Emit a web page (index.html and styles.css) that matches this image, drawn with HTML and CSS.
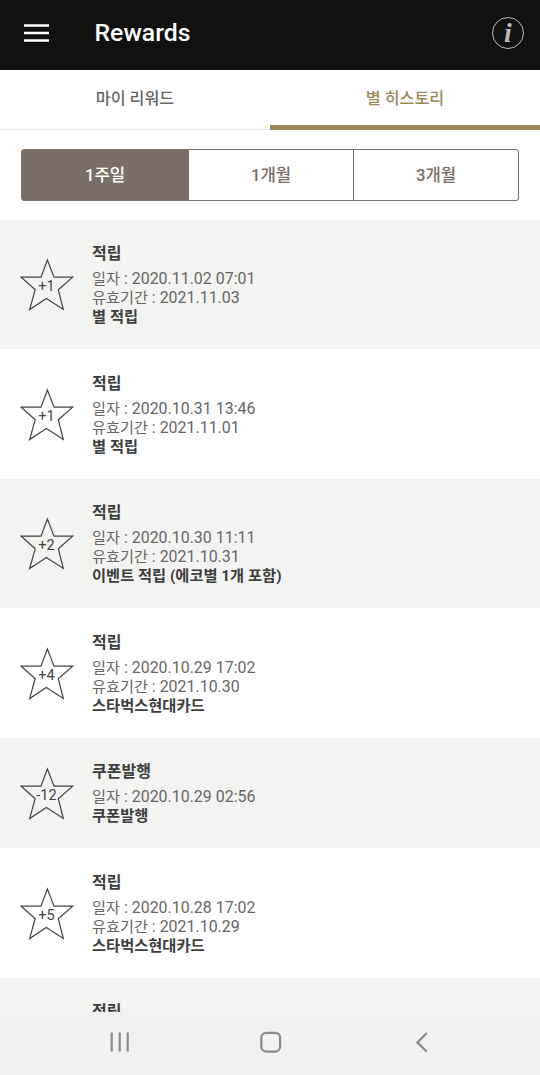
FILE: index.html
```html
<!DOCTYPE html>
<html lang="ko">
<head>
  <meta charset="UTF-8" />
  <meta name="viewport" content="width=device-width, initial-scale=1" />
  <title>Rewards</title>
  <link rel="stylesheet" href="styles.css">
</head>
<body>
  <div class="app">
    <header class="header">
      <button class="menu-btn" aria-label="menu">
        <svg width="26" height="18" viewBox="0 0 26 18"><path d="M0 1.5h25M0 9h25M0 16.5h25" stroke="#fff" stroke-width="2.6"/></svg>
      </button>
      <h1>Rewards</h1>
      <button class="info-btn" aria-label="info"><span>i</span></button>
    </header>

    <nav class="tabs">
      <a class="tab">마이 리워드</a>
      <a class="tab active">별 히스토리</a>
    </nav>

    <div class="period">
      <button class="period-btn selected">1주일</button>
      <button class="period-btn">1개월</button>
      <button class="period-btn">3개월</button>
    </div>

    <ul class="history" id="history"></ul>

    <footer class="navbar">
      <svg class="nav-icon" width="24" height="24" viewBox="0 0 24 24"><path d="M3.7 2.5v19M11.7 2.5v19M19.7 2.5v19"/></svg>
      <svg class="nav-icon" width="24" height="24" viewBox="0 0 24 24"><rect x="2.3" y="2.8" width="18.8" height="18.8" rx="5.2"/></svg>
      <svg class="nav-icon" width="24" height="24" viewBox="0 0 24 24"><path d="M16.8 3L7.4 12.4l9.4 9.4"/></svg>
    </footer>
  </div>

  <script>
    const history = [
      { star: '+1', title: '적립', date: '2020.11.02 07:01', expire: '2021.11.03', memo: '별 적립' },
      { star: '+1', title: '적립', date: '2020.10.31 13:46', expire: '2021.11.01', memo: '별 적립' },
      { star: '+2', title: '적립', date: '2020.10.30 11:11', expire: '2021.10.31', memo: '이벤트 적립 (에코별 1개 포함)' },
      { star: '+4', title: '적립', date: '2020.10.29 17:02', expire: '2021.10.30', memo: '스타벅스현대카드' },
      { star: '-12', title: '쿠폰발행', date: '2020.10.29 02:56', memo: '쿠폰발행' },
      { star: '+5', title: '적립', date: '2020.10.28 17:02', expire: '2021.10.29', memo: '스타벅스현대카드' },
      { title: '적립' }
    ];

    const line = (label, value) =>
      value ? `<p class="line"><span class="label">${label}</span> : ${value}</p>` : '';

    const starIcon = (text) => text ? `
      <svg class="star" width="54" height="54" viewBox="0 0 54 54">
        <path d="M27.4 2L34 19.2H52.7L38.3 31.7L43.3 51.5L26.4 40.5L9.6 51.5L15.2 31.7L1.2 19.2H21Z"/>
        <text x="26.5" y="33">${text}</text>
      </svg>` : '<span class="star"></span>';

    document.getElementById('history').innerHTML = history.map(item => `
      <li class="item">
        ${starIcon(item.star)}
        <div class="detail">
          <h2>${item.title}</h2>
          ${line('일자', item.date)}
          ${line('유효기간', item.expire)}
          ${item.memo ? `<p class="memo">${item.memo}</p>` : ''}
        </div>
      </li>
    `).join('');
  </script>
</body>
</html>
```
FILE: styles.css
```css
* {
  box-sizing: border-box;
}

body {
  margin: 0;
  background: #fff;
  font-family: Roboto, "Noto Sans CJK KR", sans-serif;
}

h1, h2, p, ul {
  margin: 0;
  padding: 0;
}

button {
  padding: 0;
  border: none;
  background: none;
  font-family: inherit;
  cursor: pointer;
}

.app {
  display: flex;
  flex-direction: column;
  height: 1075px;
  overflow: hidden;
}

.header {
  display: flex;
  flex: none;
  align-items: center;
  height: 70px;
  padding: 0 16px 5px 24px;
  background: #111;
  color: #fff;
}

.menu-btn {
  height: 18px;
}

.menu-btn svg {
  display: block;
}

.header h1 {
  flex: 1;
  margin-left: 44.5px;
  font-size: 24.8px;
  font-weight: 500;
  line-height: 30px;
}

.info-btn {
  width: 32px;
  height: 32px;
  border: 1.5px solid #bbb;
  border-radius: 50%;
  color: #bbb;
  font: italic bold 28px/28px "Liberation Serif", serif;
}

.tabs {
  display: flex;
  flex: none;
  height: 60px;
}

.tab {
  flex: 1;
  border-bottom: 1px solid #e8e8e8;
  color: #666;
  font-size: 16.2px;
  font-weight: 500;
  line-height: 57px;
  text-align: center;
}

.tab.active {
  border-bottom: 5px solid #9d8855;
  color: #9d8855;
}

.period {
  display: flex;
  flex: none;
  height: 52px;
  margin: 19px 21px 18.75px;
  border: 1px solid #7a6e65;
  border-radius: 3px;
}

.period-btn {
  flex: 1;
  padding-bottom: 3px;
  border-left: 1px solid #7a6e65;
  color: #7a6e65;
  font-size: 16.7px;
  font-weight: 500;
}

.period-btn:first-child {
  border-left: none;
}

.period-btn:last-child {
  flex: 0 0 165px;
}

.period-btn.selected {
  flex: 0 0 166px;
  background: #7b6e66;
  color: #fff;
}

.history {
  flex: 1;
  min-height: 0;
  overflow: hidden;
  list-style: none;
}

.item {
  display: flex;
  padding: 24.5px 20px 23px;
}

.item:nth-child(odd) {
  background: #f3f3f1;
}

.star {
  flex: none;
  align-self: center;
  width: 54px;
  height: 54px;
}

.star path {
  fill: none;
  stroke: #444;
  stroke-width: 1.2;
}

.star text {
  fill: #444;
  font-size: 14.5px;
  text-anchor: middle;
}

.detail {
  margin-left: 18px;
  color: #666;
}

.detail h2 {
  margin-bottom: 6px;
  color: #3d3d3d;
  font-size: 16px;
  font-weight: 700;
  line-height: 19px;
}

.line {
  height: 19px;
  font-size: 15.95px;
  line-height: 19px;
}

.label {
  font-size: 15.2px;
}

.memo {
  height: 19px;
  color: #3d3d3d;
  font-size: 15.3px;
  font-weight: 700;
  line-height: 20px;
}

.navbar {
  display: flex;
  flex: none;
  align-items: center;
  justify-content: space-between;
  height: 63px;
  padding: 0 106px 3px 108px;
  background: #f1f1f1;
}

.nav-icon {
  fill: none;
  stroke: #8a8a8a;
  stroke-width: 2.2;
}
```
